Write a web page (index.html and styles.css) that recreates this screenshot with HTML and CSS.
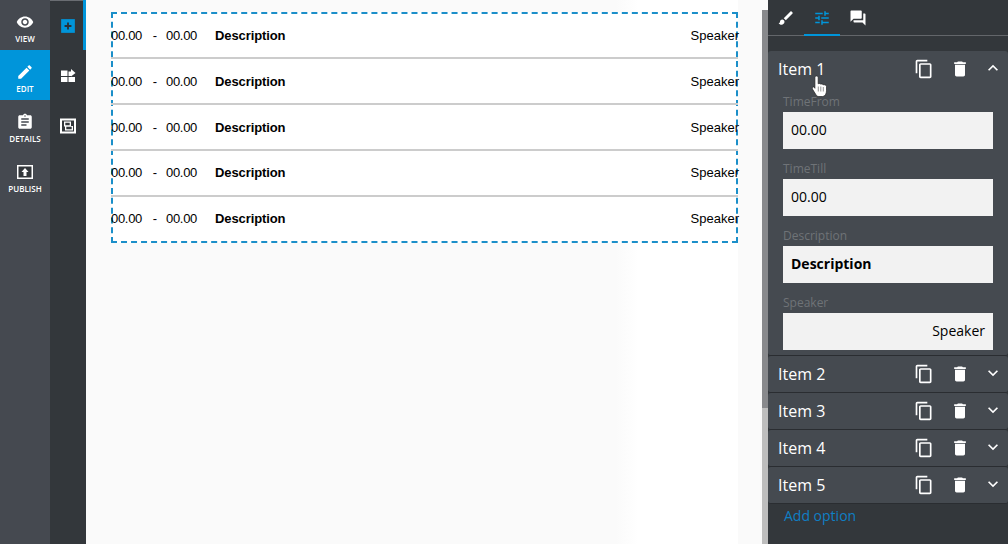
FILE: index.html
```html
<!DOCTYPE html>
<html>

<head>
    <meta charset="UTF-8">
    <title>Agenda editor</title>
    <link rel="stylesheet" href="styles.css">
</head>

<body>
    <div class="app">
        <nav class="nav">
            <a class="nav-item">
                <svg viewBox="0 0 24 24"><path d="M12 4.500C7 4.500 2.730 7.610 1 12c1.730 4.390 6 7.500 11 7.500s9.270-3.110 11-7.500c-1.730-4.390-6-7.500-11-7.500zM12 17c-2.760 0-5-2.240-5-5s2.240-5 5-5 5 2.240 5 5-2.240 5-5 5zm0-8c-1.660 0-3 1.340-3 3s1.340 3 3 3 3-1.340 3-3-1.340-3-3-3z"/></svg>
                VIEW
            </a>
            <a class="nav-item active">
                <svg viewBox="0 0 24 24"><path d="M3 17.250V21h3.750L17.810 9.940l-3.750-3.750L3 17.250zM20.710 7.040c.39-.39.39-1.020 0-1.410l-2.340-2.340c-.39-.39-1.020-.39-1.410 0l-1.830 1.830 3.750 3.750 1.830-1.830z"/></svg>
                EDIT
            </a>
            <a class="nav-item">
                <svg viewBox="0 0 24 24"><path d="M19 3h-4.180C14.400 1.840 13.300 1 12 1c-1.300 0-2.400.84-2.820 2H5c-1.100 0-2 .9-2 2v14c0 1.100.9 2 2 2h14c1.100 0 2-.9 2-2V5c0-1.100-.9-2-2-2zm-7 0c.55 0 1 .45 1 1s-.45 1-1 1-1-.45-1-1 .45-1 1-1zm2 14H7v-2h7v2zm3-4H7v-2h10v2zm0-4H7V7h10v2z"/></svg>
                DETAILS
            </a>
            <a class="nav-item">
                <svg viewBox="0 0 18 18"><rect x="1" y="2" width="16" height="14" fill="#33373b"/><path fill-rule="evenodd" d="M1 2h16v14H1zM2.500 3.500v11h13v-11z"/><path d="M9 5l3.500 4H10.500v4h-3V9H5.500z"/></svg>
                PUBLISH
            </a>
        </nav>

        <div class="subnav">
            <a class="sub-item selected">
                <svg viewBox="0 0 14 14"><rect x="1" y="1" width="12" height="12" fill="#0095da"/><path d="M4 6.200h2.200V4h1.600v2.200H10v1.600H7.800V10H6.200V7.800H4z" fill="#2b3036"/></svg>
            </a>
            <a class="sub-item">
                <svg viewBox="0 0 16 16"><path d="M1 2.500h6.500V8H1zM1 9h6.500v5H1zM8.500 9H15v5H8.500zM8.500 3.500h2.500V1l4.500 4-4.500 3.500V8H8.500z" fill="#fff"/></svg>
            </a>
            <a class="sub-item">
                <svg viewBox="0 0 16 16"><path fill-rule="evenodd" d="M0 .5h16v15H0zM2 2.500v11h12v-11z" fill="#fff"/><path fill-rule="evenodd" d="M4 3.500h7v4.500h2v4.500H5V8.500H4zM5.300 4.800v2.500h4.400V4.800zM6.300 8.700v2.500h5.400V8.700z" fill="#fff"/></svg>
            </a>
        </div>

        <main class="canvas">
            <div class="agenda">
                <div class="agenda-row">
                    <span class="time">00.00</span><span class="dash">-</span><span class="time">00.00</span>
                    <b class="desc">Description</b>
                    <span class="speaker">Speaker</span>
                </div>
                <div class="agenda-row">
                    <span class="time">00.00</span><span class="dash">-</span><span class="time">00.00</span>
                    <b class="desc">Description</b>
                    <span class="speaker">Speaker</span>
                </div>
                <div class="agenda-row">
                    <span class="time">00.00</span><span class="dash">-</span><span class="time">00.00</span>
                    <b class="desc">Description</b>
                    <span class="speaker">Speaker</span>
                </div>
                <div class="agenda-row">
                    <span class="time">00.00</span><span class="dash">-</span><span class="time">00.00</span>
                    <b class="desc">Description</b>
                    <span class="speaker">Speaker</span>
                </div>
                <div class="agenda-row">
                    <span class="time">00.00</span><span class="dash">-</span><span class="time">00.00</span>
                    <b class="desc">Description</b>
                    <span class="speaker">Speaker</span>
                </div>
            </div>
        </main>

        <div class="scrollbar"><div class="thumb"></div></div>

        <aside class="panel">
            <div class="tabs">
                <a class="tab">
                    <svg viewBox="0 0 24 24"><path d="M7 14c-1.660 0-3 1.340-3 3 0 1.310-1.160 2-2 2 .92 1.220 2.490 2 4 2 2.210 0 4-1.790 4-4 0-1.660-1.340-3-3-3zm13.710-9.370l-1.340-1.340c-.39-.39-1.020-.39-1.410 0L9 12.250 11.750 15l8.960-8.960c.39-.39.39-1.020 0-1.410z"/></svg>
                </a>
                <a class="tab current">
                    <svg viewBox="0 0 24 24"><path d="M3 17v2h6v-2H3zM3 5v2h10V5H3zm10 16v-2h8v-2h-8v-2h-2v6h2zM7 9v2H3v2h4v2h2V9H7zm14 4v-2H11v2h10zm-6-4h2V7h4V5h-4V3h-2v6z"/></svg>
                </a>
                <a class="tab">
                    <svg viewBox="0 0 24 24"><path d="M21 6h-2v9H6v2c0 .55.45 1 1 1h11l4 4V7c0-.55-.45-1-1-1zm-4 6V3c0-.55-.45-1-1-1H3c-.55 0-1 .45-1 1v14l4-4h10c.55 0 1-.45 1-1z"/></svg>
                </a>
            </div>

            <div class="items">
                <section class="item open">
                    <header class="item-head">
                        <span class="item-name">Item 1</span>
                        <svg class="ico" viewBox="0 0 24 24"><path d="M16 1H4c-1.100 0-2 .9-2 2v14h2V3h12V1zm3 4H8c-1.100 0-2 .9-2 2v14c0 1.100.9 2 2 2h11c1.100 0 2-.9 2-2V7c0-1.100-.9-2-2-2zm0 16H8V7h11v14z"/></svg>
                        <svg class="ico" viewBox="0 0 24 24"><path d="M6 19c0 1.100.9 2 2 2h8c1.100 0 2-.9 2-2V7H6v12zM19 4h-3.500l-1-1h-5l-1 1H5v2h14V4z"/></svg>
                        <svg class="ico chevron" viewBox="0 0 24 24"><path d="M12 8l-6 6 1.410 1.410L12 10.830l4.590 4.580L18 14z"/></svg>
                    </header>
                    <div class="fields">
                        <label class="field-label">TimeFrom</label>
                        <div class="field">00.00</div>
                        <label class="field-label">TimeTill</label>
                        <div class="field">00.00</div>
                        <label class="field-label">Description</label>
                        <div class="field strong">Description</div>
                        <label class="field-label">Speaker</label>
                        <div class="field right">Speaker</div>
                    </div>
                    <svg class="pointer" viewBox="0 0 15 22"><path d="M4.500.5c1 0 1.700.7 1.700 1.700v6.100c.9-.5 2-.4 2.500.4.800-.5 2-.3 2.400.6.900-.4 3.400 0 3.400 1.700v4.300c0 2.700-1.500 5.700-3.800 5.700H6.800c-1.500 0-2.300-.8-3-2L.4 13.500c-.7-1.300.9-2.700 2-1.700l.5 1V2.200C2.900 1.200 3.500.5 4.500.5z" fill="#fff" stroke="#222" stroke-width=".7"/><path d="M6.300 11v5M8.800 11v5M11.300 11.500V16" stroke="#666" stroke-width=".7" fill="none"/></svg>
                </section>

                <section class="item">
                    <header class="item-head">
                        <span class="item-name">Item 2</span>
                        <svg class="ico" viewBox="0 0 24 24"><path d="M16 1H4c-1.100 0-2 .9-2 2v14h2V3h12V1zm3 4H8c-1.100 0-2 .9-2 2v14c0 1.100.9 2 2 2h11c1.100 0 2-.9 2-2V7c0-1.100-.9-2-2-2zm0 16H8V7h11v14z"/></svg>
                        <svg class="ico" viewBox="0 0 24 24"><path d="M6 19c0 1.100.9 2 2 2h8c1.100 0 2-.9 2-2V7H6v12zM19 4h-3.500l-1-1h-5l-1 1H5v2h14V4z"/></svg>
                        <svg class="ico chevron" viewBox="0 0 24 24"><path d="M16.590 8.590L12 13.170 7.410 8.590 6 10l6 6 6-6z"/></svg>
                    </header>
                </section>
                <section class="item">
                    <header class="item-head">
                        <span class="item-name">Item 3</span>
                        <svg class="ico" viewBox="0 0 24 24"><path d="M16 1H4c-1.100 0-2 .9-2 2v14h2V3h12V1zm3 4H8c-1.100 0-2 .9-2 2v14c0 1.100.9 2 2 2h11c1.100 0 2-.9 2-2V7c0-1.100-.9-2-2-2zm0 16H8V7h11v14z"/></svg>
                        <svg class="ico" viewBox="0 0 24 24"><path d="M6 19c0 1.100.9 2 2 2h8c1.100 0 2-.9 2-2V7H6v12zM19 4h-3.500l-1-1h-5l-1 1H5v2h14V4z"/></svg>
                        <svg class="ico chevron" viewBox="0 0 24 24"><path d="M16.590 8.590L12 13.170 7.410 8.590 6 10l6 6 6-6z"/></svg>
                    </header>
                </section>
                <section class="item">
                    <header class="item-head">
                        <span class="item-name">Item 4</span>
                        <svg class="ico" viewBox="0 0 24 24"><path d="M16 1H4c-1.100 0-2 .9-2 2v14h2V3h12V1zm3 4H8c-1.100 0-2 .9-2 2v14c0 1.100.9 2 2 2h11c1.100 0 2-.9 2-2V7c0-1.100-.9-2-2-2zm0 16H8V7h11v14z"/></svg>
                        <svg class="ico" viewBox="0 0 24 24"><path d="M6 19c0 1.100.9 2 2 2h8c1.100 0 2-.9 2-2V7H6v12zM19 4h-3.500l-1-1h-5l-1 1H5v2h14V4z"/></svg>
                        <svg class="ico chevron" viewBox="0 0 24 24"><path d="M16.590 8.590L12 13.170 7.410 8.590 6 10l6 6 6-6z"/></svg>
                    </header>
                </section>
                <section class="item">
                    <header class="item-head">
                        <span class="item-name">Item 5</span>
                        <svg class="ico" viewBox="0 0 24 24"><path d="M16 1H4c-1.100 0-2 .9-2 2v14h2V3h12V1zm3 4H8c-1.100 0-2 .9-2 2v14c0 1.100.9 2 2 2h11c1.100 0 2-.9 2-2V7c0-1.100-.9-2-2-2zm0 16H8V7h11v14z"/></svg>
                        <svg class="ico" viewBox="0 0 24 24"><path d="M6 19c0 1.100.9 2 2 2h8c1.100 0 2-.9 2-2V7H6v12zM19 4h-3.500l-1-1h-5l-1 1H5v2h14V4z"/></svg>
                        <svg class="ico chevron" viewBox="0 0 24 24"><path d="M16.590 8.590L12 13.170 7.410 8.590 6 10l6 6 6-6z"/></svg>
                    </header>
                </section>
            </div>
            <a class="add-option">Add option</a>
        </aside>
    </div>
</body>

</html>
```

FILE: styles.css
```css
* {
    box-sizing: border-box;
}

html,
body {
    margin: 0;
    height: 100%;
    overflow: hidden;
}

.app {
    display: flex;
    width: 1008px;
    height: 544px;
    font-family: "Open Sans", sans-serif;
}

/* main nav */
.nav {
    width: 50px;
    flex-shrink: 0;
    background-color: #454950;
}

.nav-item {
    display: flex;
    flex-direction: column;
    align-items: center;
    height: 50px;
    padding-top: 13px;
    color: #fff;
    font-size: 8px;
    font-weight: 600;
    line-height: 11px;
}

.nav-item svg {
    width: 18px;
    height: 18px;
    margin-bottom: 2px;
    fill: #fff;
}

.nav-item.active {
    background-color: #0095da;
}

/* second column */
.subnav {
    width: 36px;
    flex-shrink: 0;
    background-color: #33373b;
    box-shadow: inset 0 1px 0 #6a6d72;
}

.sub-item {
    display: flex;
    align-items: center;
    justify-content: center;
    height: 50px;
    padding-top: 2px;
}

.sub-item svg {
    width: 16px;
    height: 16px;
}

.sub-item.selected {
    border-right: 3px solid #0095da;
    padding-left: 3px;
}

/* page */
.canvas {
    width: 676px;
    flex-shrink: 0;
    padding: 12px 0 0 25px;
    background: linear-gradient(to right, #fafafa 0, #fafafa 530px, #fff 552px, #fff 652px, #fafafa 652px);
}

.agenda {
    width: 627px;
    height: 231px;
    background-color: #fff;
    border: 2px dashed #1b8fc9;
    font-family: "Liberation Sans", sans-serif;
    color: #000;
}

.agenda-row {
    display: flex;
    align-items: center;
    height: 46px;
    margin: 0 -2px;
    border-bottom: 2px solid #ccc;
    white-space: nowrap;
}

.agenda-row:first-child {
    height: 45px;
}

.agenda-row:nth-child(4) {
    padding-bottom: 2px;
}

.agenda-row:last-child {
    padding-bottom: 4px;
    border-bottom: none;
}

.time {
    width: 31px;
    font-size: 13px;
    letter-spacing: -.3px;
}

.dash {
    width: 24px;
    padding-left: 2px;
    font-size: 13px;
    text-align: center;
}

.desc {
    margin-left: 18px;
    font-size: 13px;
    letter-spacing: -.1px;
}

.speaker {
    margin-left: auto;
    margin-right: -1px;
    font-size: 13px;
}

/* scrollbar */
.scrollbar {
    width: 6px;
    flex-shrink: 0;
    padding-top: 10px;
    background: linear-gradient(#fafafa 10px, #bdbdbd 10px);
}

.thumb {
    height: 398px;
    background-color: #88898c;
}

/* right panel */
.panel {
    width: 240px;
    flex-shrink: 0;
    background-color: #33373b;
}

.tabs {
    display: flex;
    height: 36px;
    border-bottom: 1px solid #63666a;
}

.tab {
    display: flex;
    justify-content: center;
    width: 36px;
    height: 36px;
    padding-top: 9px;
}

.tab svg {
    width: 18px;
    height: 18px;
    fill: #fff;
}

.tab.current {
    border-bottom: 2px solid #0095da;
}

.tab.current svg {
    fill: #0095da;
}

.items {
    margin-top: 15px;
}

.item {
    position: relative;
    background-color: #454a50;
    border-bottom: 1px solid #2a2d31;
    border-radius: 3px;
}

.item-head {
    display: flex;
    align-items: center;
    height: 36px;
    padding-left: 10px;
    color: #fff;
}

.item-name {
    width: 136px;
    font-size: 16px;
}

.ico {
    width: 20px;
    height: 20px;
    margin-right: 16px;
    fill: #fff;
}

.ico.chevron {
    margin: 0 0 2px -3px;
}

.fields {
    padding: 0 15px 5px;
}

.field-label {
    display: block;
    height: 25px;
    padding-top: 6px;
    font-size: 12px;
    line-height: 18px;
    color: #6f7377;
}

.field {
    height: 37px;
    margin-bottom: 5px;
    padding: 0 8px;
    background-color: #f2f2f2;
    font-size: 14px;
    line-height: 35px;
    color: #000;
}

.field:last-child {
    margin-bottom: 0;
}

.field.strong {
    font-weight: 700;
}

.field.right {
    text-align: right;
}

.pointer {
    position: absolute;
    left: 44px;
    top: 24px;
    width: 15px;
    height: 23px;
}

.add-option {
    display: block;
    padding: 2px 0 0 16px;
    font-size: 14px;
    line-height: 19px;
    color: #0f7fc4;
}
```
